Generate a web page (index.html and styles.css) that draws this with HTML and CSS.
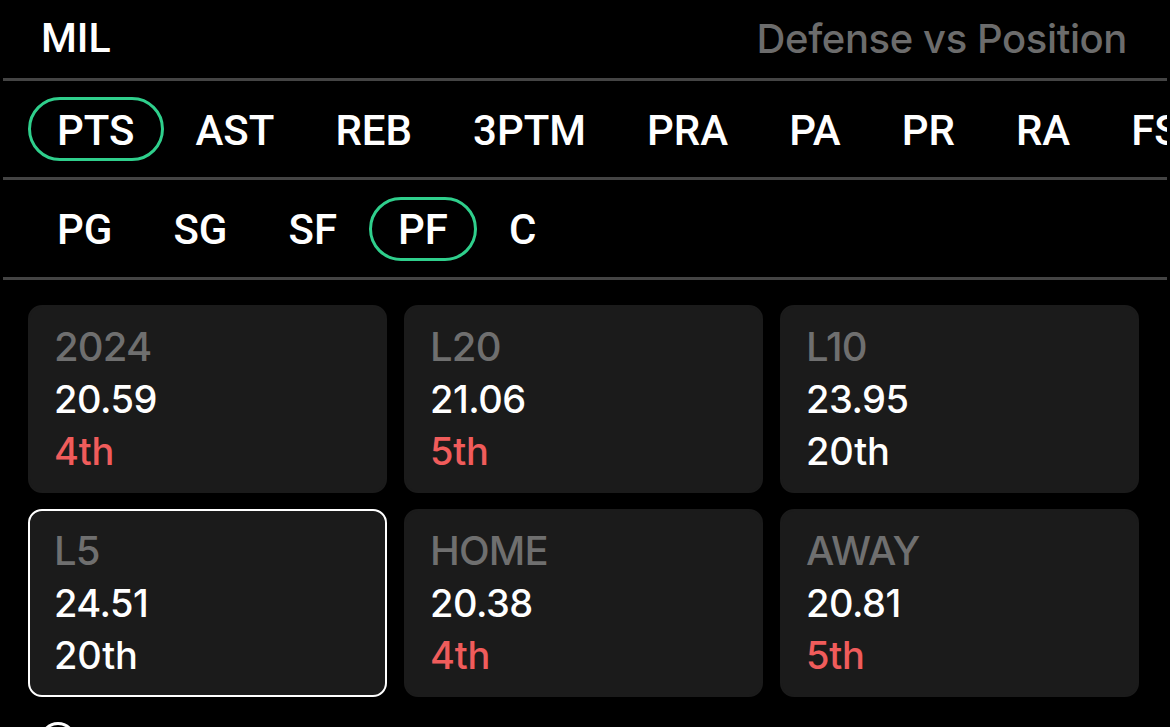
FILE: index.html
```html
<!DOCTYPE html>
<html lang="en">
<head>
<meta charset="utf-8">
<title>MIL - Defense vs Position</title>
<link rel="stylesheet" href="styles.css">
</head>
<body>
<div class="app">
  <header class="header">
    <div class="team">MIL</div>
    <div class="title">Defense vs Position</div>
  </header>
  <div class="divider"></div>
  <nav class="tabs">
    <span class="tab active">PTS</span>
    <span class="tab">AST</span>
    <span class="tab">REB</span>
    <span class="tab">3PTM</span>
    <span class="tab">PRA</span>
    <span class="tab">PA</span>
    <span class="tab">PR</span>
    <span class="tab">RA</span>
    <span class="tab">FS</span>
  </nav>
  <div class="divider"></div>
  <nav class="tabs positions">
    <span class="tab">PG</span>
    <span class="tab">SG</span>
    <span class="tab">SF</span>
    <span class="tab active">PF</span>
    <span class="tab">C</span>
  </nav>
  <div class="divider"></div>
  <section class="grid">
    <div class="card">
      <div class="label">2024</div>
      <div class="value">20.59</div>
      <div class="rank bad">4th</div>
    </div>
    <div class="card">
      <div class="label">L20</div>
      <div class="value">21.06</div>
      <div class="rank bad">5th</div>
    </div>
    <div class="card">
      <div class="label">L10</div>
      <div class="value">23.95</div>
      <div class="rank">20th</div>
    </div>
    <div class="card selected">
      <div class="label">L5</div>
      <div class="value">24.51</div>
      <div class="rank">20th</div>
    </div>
    <div class="card">
      <div class="label">HOME</div>
      <div class="value">20.38</div>
      <div class="rank bad">4th</div>
    </div>
    <div class="card">
      <div class="label">AWAY</div>
      <div class="value">20.81</div>
      <div class="rank bad">5th</div>
    </div>
  </section>
  <div class="footer">
    <span class="radio"></span>
  </div>
</div>
</body>
</html>
```
FILE: styles.css
```css
* { box-sizing: border-box; }
html, body {
  margin: 0;
  padding: 0;
  background: #000;
  height: 100%;
  overflow: hidden;
}
.app {
  color: #fff;
  font-family: Roboto, "Liberation Sans", sans-serif;
}
.header {
  height: 78px;
  display: flex;
  align-items: center;
  justify-content: space-between;
  padding: 0 43px 2px 41px;
}
.team {
  font-size: 41px;
  font-weight: 500;
}
.title {
  font-family: Inter, sans-serif;
  font-size: 40px;
  font-weight: 500;
  color: #6c6c6c;
  letter-spacing: -0.4px;
}
.divider {
  height: 3px;
  margin: 0 3px;
  background: #444;
}
.tabs {
  height: 96px;
  margin: 0 3px;
  padding-left: 25px;
  display: flex;
  align-items: center;
  gap: 3px;
  overflow: hidden;
  white-space: nowrap;
}
.positions {
  height: 97px;
}
.tab {
  flex: none;
  height: 64px;
  padding: 3px 26px 0;
  display: flex;
  align-items: center;
  border: 3px solid transparent;
  border-radius: 32px;
  font-size: 42px;
  font-weight: 500;
  line-height: 1;
}
.tab.active {
  border-color: #2fcf8c;
}
.grid {
  margin: 25px 31px 0 28px;
  display: grid;
  grid-template-columns: repeat(3, 359px);
  column-gap: 17px;
  row-gap: 16px;
}
.card {
  height: 188px;
  background: #1b1b1b;
  border-radius: 14px;
  padding: 14px 24px 0 24px;
  border: 2px solid #1b1b1b;
  font-family: Inter, sans-serif;
  line-height: 52px;
}
.card.selected {
  border-color: #fff;
}
.label {
  font-size: 40px;
  color: #6f6f6f;
  font-weight: 500;
  letter-spacing: -0.8px;
}
.value {
  font-size: 38px;
  font-weight: 500;
  letter-spacing: -0.5px;
}
.rank {
  font-size: 38px;
  font-weight: 500;
  letter-spacing: -0.2px;
}
.rank.bad {
  color: #f05c5b;
}
.footer {
  padding: 25px 0 0 40px;
}
.radio {
  display: block;
  width: 36px;
  height: 36px;
  border: 3px solid #fff;
  border-radius: 50%;
}
```
